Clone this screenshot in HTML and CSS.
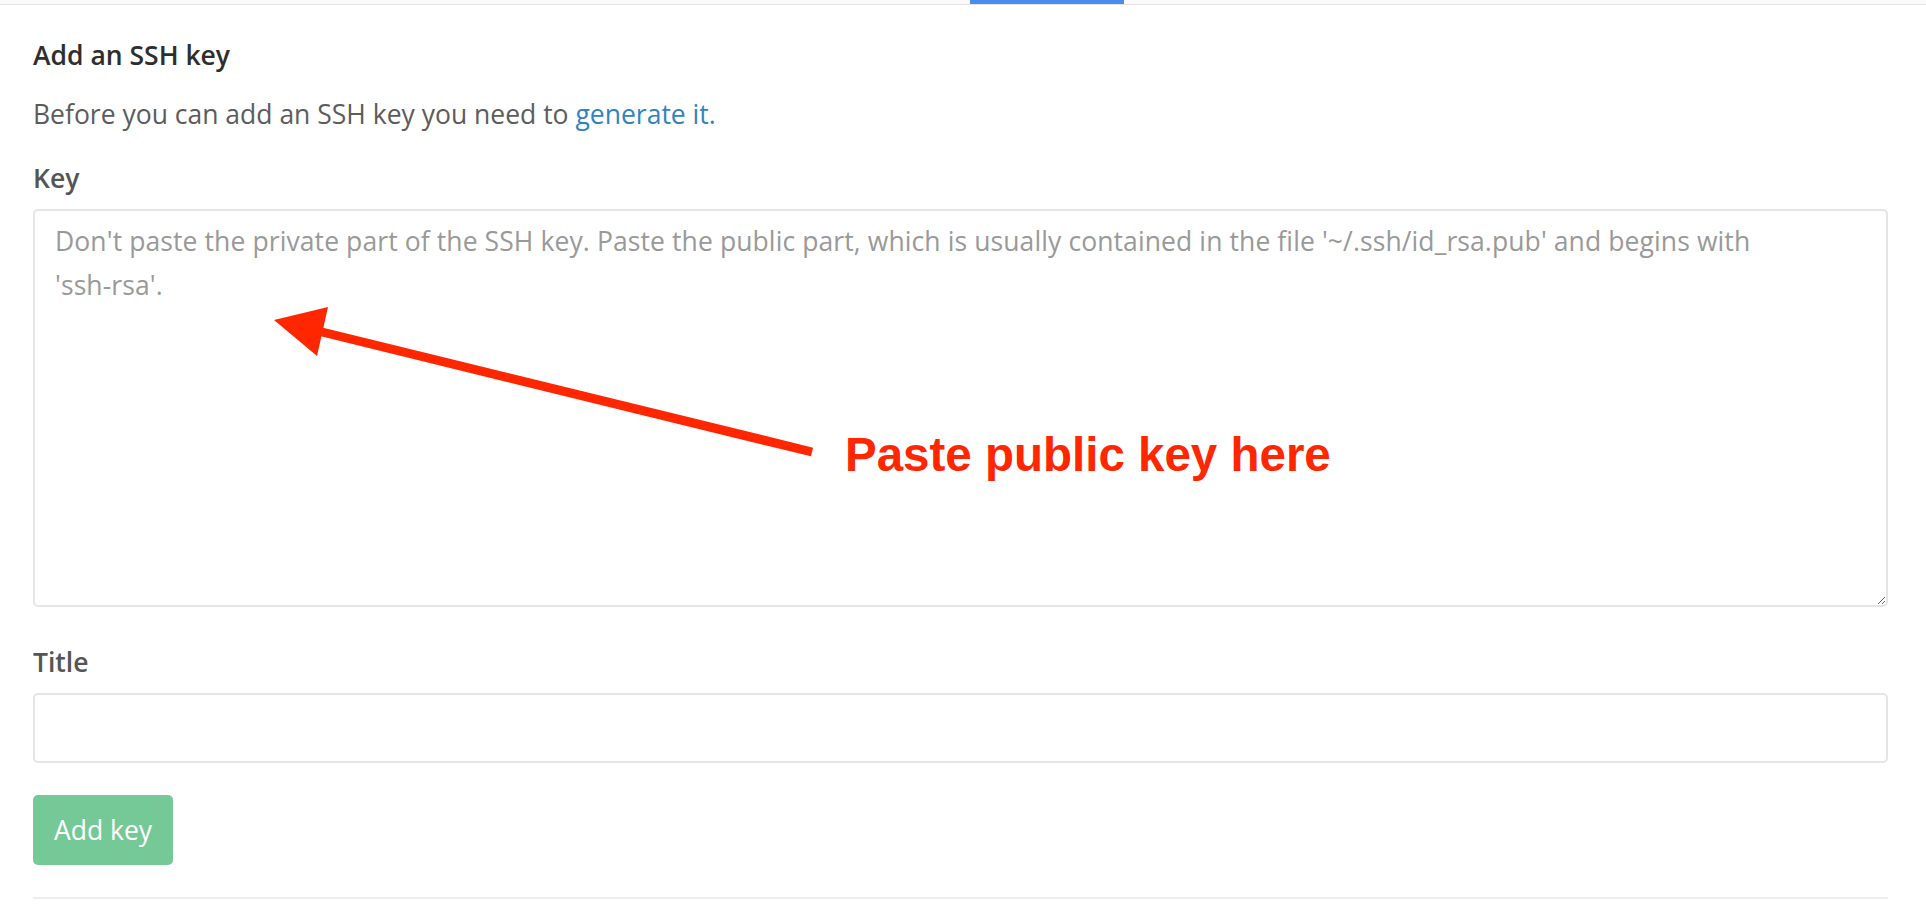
FILE: index.html
```html
<!DOCTYPE html>
<html lang="en">
<head>
    <meta charset="UTF-8">
    <meta name="viewport" content="width=device-width, initial-scale=1.0">
    <title>SSH Keys</title>
    <link rel="stylesheet" href="styles.css">
</head>
<body>
    <!-- bottom edge of the profile tabs -->
    <div class="tabs-strip">
        <span class="tab-active"></span>
    </div>

    <main class="content">
        <h4 class="section-title">Add an SSH key</h4>
        <p class="intro">Before you can add an SSH key you need to <a href="#">generate it.</a></p>

        <form class="key-form">
            <label class="field-label" for="key">Key</label>
            <textarea id="key" class="form-control key-input" placeholder="Don't paste the private part of the SSH key. Paste the public part, which is usually contained in the file '~/.ssh/id_rsa.pub' and begins with&#10;'ssh-rsa'."></textarea>

            <label class="field-label title-label" for="title">Title</label>
            <input type="text" id="title" class="form-control title-input">

            <button type="submit" class="btn-create" disabled>Add key</button>
        </form>

        <hr class="divider">
    </main>

    <!-- screenshot annotation -->
    <svg class="annotation" width="1926" height="914" viewBox="0 0 1926 914">
        <line x1="322" y1="332" x2="812" y2="452" class="arrow-shaft"/>
        <polygon points="274,320 328,307 317,356" class="arrow-head"/>
        <text x="845" y="471" class="annotation-text">Paste public key here</text>
    </svg>
</body>
</html>
```

FILE: styles.css
```css
body {
    margin: 0;
    font-family: "Open Sans", "Noto Sans", sans-serif;
    color: #5c5c5c;
    background-color: #fff;
}

.tabs-strip {
    height: 4px;
    background-color: #fafafa;
    border-bottom: 1px solid #e5e5e5;
}

.tab-active {
    display: block;
    margin-left: 970px;
    width: 154px;
    height: 4px;
    background-color: #4a8bee;
}

.content {
    padding: 0 38px 0 33px;
}

.section-title {
    margin: 32px 0 0;
    font-size: 26.5px;
    line-height: 36px;
    font-weight: 600;
    color: #2e2e2e;
}

.intro {
    margin: 23px 0 0;
    font-size: 26.5px;
    line-height: 36px;
}

.intro a {
    color: #3084bb;
    text-decoration: none;
}

.field-label {
    display: block;
    margin-top: 28px;
    font-size: 26.5px;
    line-height: 36px;
    font-weight: 600;
    color: #555;
}

.title-label {
    margin-top: 37px;
}

.form-control {
    display: block;
    width: 100%;
    box-sizing: border-box;
    margin-top: 13px;
    border: 2px solid #e5e5e5;
    border-radius: 5px;
    font-family: "Open Sans", "Noto Sans", sans-serif;
    font-size: 26.5px;
    color: #555;
    background-color: #fff;
    outline: none;
}

.form-control::placeholder {
    color: #999;
    letter-spacing: 0.1px;
}

.key-input {
    height: 398px;
    padding: 8px 20px;
    line-height: 44px;
}

.title-input {
    height: 70px;
    padding: 0 20px;
}

.btn-create {
    display: block;
    margin-top: 32px;
    height: 70px;
    padding: 0 21px;
    border: none;
    border-radius: 5px;
    background-color: #75c997;
    color: #fff;
    font-family: "Open Sans", "Noto Sans", sans-serif;
    font-size: 26.5px;
    font-weight: 500;
}

.divider {
    margin: 32px 0 0;
    border: none;
    border-top: 2px solid #eee;
}

.annotation {
    position: absolute;
    top: 0;
    left: 0;
    pointer-events: none;
}

.arrow-shaft {
    stroke: #ff2600;
    stroke-width: 9;
}

.arrow-head {
    fill: #ff2600;
}

.annotation-text {
    fill: #ff2600;
    font-family: "Liberation Sans", Arial, sans-serif;
    font-weight: 700;
    font-size: 47.5px;
}
```
